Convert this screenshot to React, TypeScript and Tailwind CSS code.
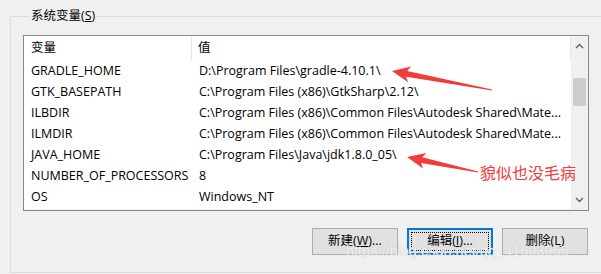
import React from "react";

const rows: [string, string][] = [
  ["GRADLE_HOME", "D:\\Program Files\\gradle-4.10.1\\"],
  ["GTK_BASEPATH", "C:\\Program Files (x86)\\GtkSharp\\2.12\\"],
  ["ILBDIR", "C:\\Program Files (x86)\\Common Files\\Autodesk Shared\\Mate..."],
  ["ILMDIR", "C:\\Program Files (x86)\\Common Files\\Autodesk Shared\\Mate..."],
  ["JAVA_HOME", "C:\\Program Files\\Java\\jdk1.8.0_05\\"],
  ["NUMBER_OF_PROCESSORS", "8"],
  ["OS", "Windows_NT"],
];

const font = { fontFamily: '"Open Sans", "Noto Sans CJK SC", sans-serif' };

function Btn({ label, u, rest, focused }: { label: string; u: string; rest: string; focused?: boolean }) {
  return (
    <div
      className={
        "w-[86px] h-[27px] bg-[#e1e1e1] flex items-center justify-center text-[12.5px] text-black " +
        (focused ? "border-2 border-[#0078d7]" : "border border-[#adadad]")
      }
    >
      <div className={focused ? "border border-dotted border-black px-[8px] h-[19px] w-[78px] flex items-center justify-center" : ""}>
        {label}(<span className="underline">{u}</span>){rest}
      </div>
    </div>
  );
}

export default function App() {
  return (
    <div className="relative w-[601px] h-[274px] overflow-hidden bg-[#f0f0f0]" style={font}>
      <div className="pl-[10px] pt-[9px]">
        <fieldset className="w-[640px] h-[264px] border border-[#dcdcdc] pl-[12px]">
          <legend className="ml-[6px] px-[2px] text-[12.5px] leading-[14px] text-black">
            系统变量(<span className="underline">S</span>)
          </legend>
          <div className="mt-[12px] w-[566px] h-[176px] border border-[#828790] bg-white flex">
            <div className="flex-1 flex flex-col text-[12.5px] text-black">
              <div className="h-[25px] flex items-stretch">
                <div className="w-[168px] pl-[7px] flex items-center border-r border-[#e5e5e5] my-[1px]">变量</div>
                <div className="flex-1 pl-[6px] flex items-center border-r border-[#e5e5e5] my-[1px]">值</div>
              </div>
              {rows.map(([k, v]) => (
                <div key={k} className="h-[21px] flex items-center whitespace-nowrap">
                  <div className="w-[168px] pl-[7px]">{k}</div>
                  <div className="flex-1 pl-[7px] overflow-hidden">{v}</div>
                </div>
              ))}
              <div className="mt-auto h-[1px] bg-[#efefef]" />
            </div>
            <div className="w-[17px] bg-[#f0f0f0] flex flex-col items-center">
              <div className="h-[20px] flex items-center justify-center">
                <svg width="9" height="6" viewBox="0 0 9 6">
                  <path d="M1 5 L4.5 1.5 L8 5" fill="none" stroke="#606060" strokeWidth="1.4" />
                </svg>
              </div>
              <div className="mt-[22px] w-[13px] h-[28px] bg-[#cdcdcd]" />
              <div className="mt-auto h-[20px] flex items-center justify-center">
                <svg width="9" height="6" viewBox="0 0 9 6">
                  <path d="M1 1 L4.5 4.5 L8 1" fill="none" stroke="#606060" strokeWidth="1.4" />
                </svg>
              </div>
            </div>
          </div>
          <div className="w-[566px] mt-[17px] flex justify-end gap-[9px] pr-[1px]">
            <Btn label="新建" u="W" rest="..." />
            <Btn label="编辑" u="I" rest="..." focused />
            <Btn label="删除" u="L" rest="" />
          </div>
        </fieldset>
      </div>

      <svg className="absolute inset-0 pointer-events-none" width="601" height="274" viewBox="0 0 601 274">
        <polygon
          points="392,71 411.1,66.5 407.2,70.9 492,89.5 492,90.5 406.1,76.7 408.1,82.2"
          fill="#f23b3b"
        />
        <polygon
          points="407,157 426.3,152.9 422.3,157.2 478,171.5 478,172.5 421.1,163 423,168.5"
          fill="#f23b3b"
        />
      </svg>
      <div
        className="absolute left-[480px] top-[161px] text-[16px] leading-[22px] text-[#f23b3b]"
        style={{ fontFamily: '"Noto Sans CJK SC", sans-serif' }}
      >
        貌似也没毛病
      </div>
      <div
        className="absolute left-[346px] top-[242px] text-[14.5px] leading-[18px] text-white/80 pointer-events-none"
        style={{ fontFamily: '"Liberation Sans", sans-serif', textShadow: "0 0 1px #b0b0b0" }}
      >
        https://blog.csdn.net/qq_41603955
      </div>
    </div>
  );
}
